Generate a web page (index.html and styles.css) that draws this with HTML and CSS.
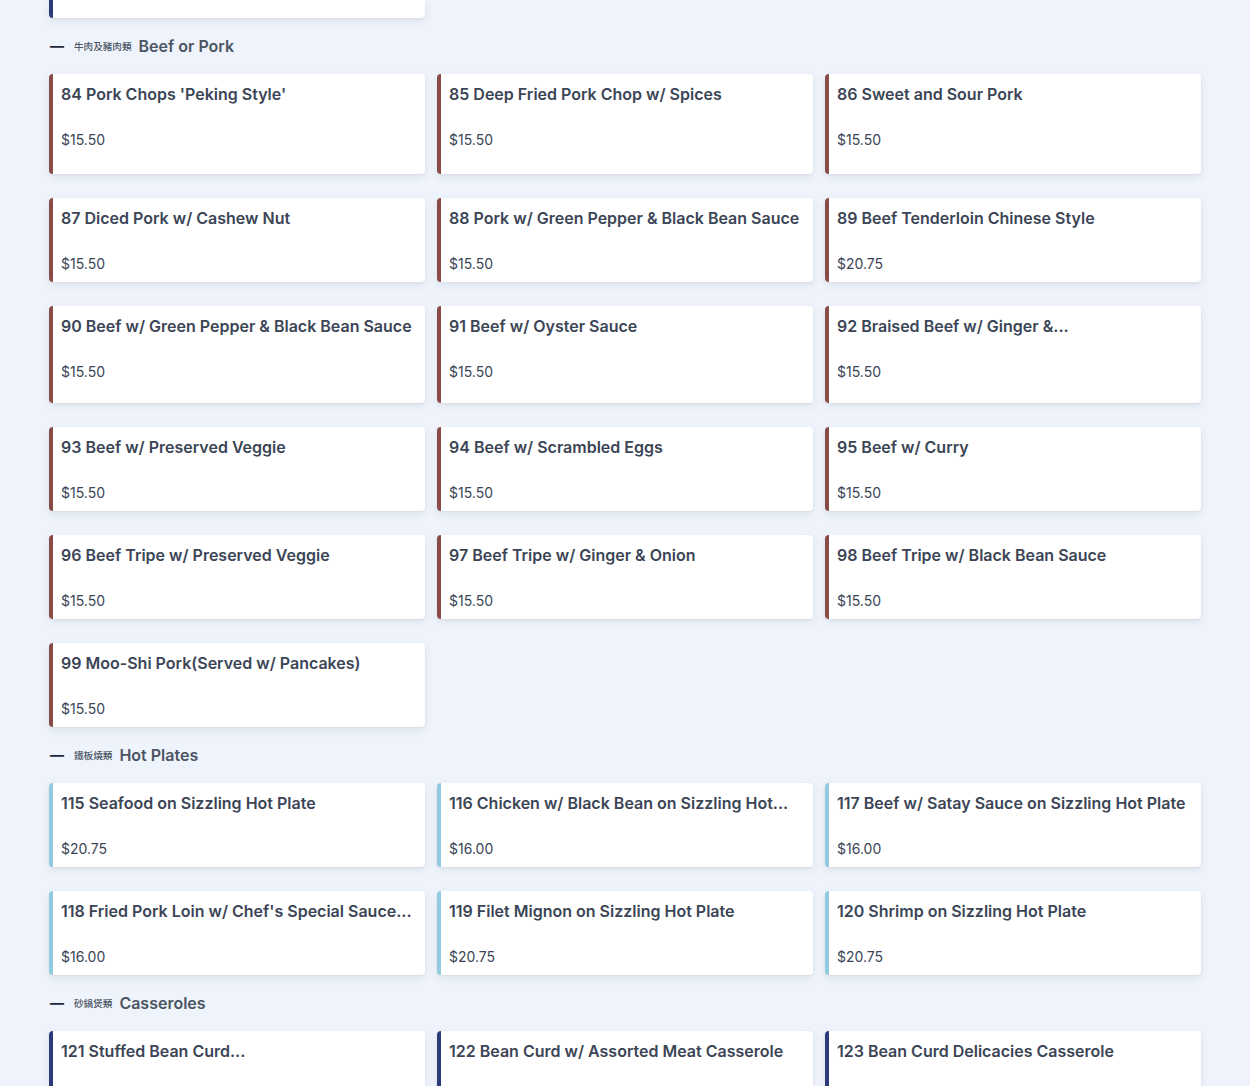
FILE: index.html
```html
<!DOCTYPE html>
<html lang="en">
<head>
<meta charset="utf-8">
<title>Menu</title>
<link rel="stylesheet" href="styles.css">
</head>
<body>
<main class="menu">
  <div class="grid">
    <div class="card card--cut casserole"></div>
  </div>

  <section class="category beef">
    <h2 class="cat-head"><span class="toggle">—</span><span class="zh" lang="zh">牛肉及豬肉類</span><span class="en">Beef or Pork</span></h2>
    <div class="grid">
      <article class="card card--tall"><h3 class="name">84 Pork Chops 'Peking Style'</h3><p class="price">$15.50</p></article>
      <article class="card"><h3 class="name">85 Deep Fried Pork Chop w/ Spices</h3><p class="price">$15.50</p></article>
      <article class="card"><h3 class="name">86 Sweet and Sour Pork</h3><p class="price">$15.50</p></article>
      <article class="card"><h3 class="name">87 Diced Pork w/ Cashew Nut</h3><p class="price">$15.50</p></article>
      <article class="card"><h3 class="name">88 Pork w/ Green Pepper &amp; Black Bean Sauce</h3><p class="price">$15.50</p></article>
      <article class="card"><h3 class="name">89 Beef Tenderloin Chinese Style</h3><p class="price">$20.75</p></article>
      <article class="card card--mid"><h3 class="name">90 Beef w/ Green Pepper &amp; Black Bean Sauce</h3><p class="price">$15.50</p></article>
      <article class="card"><h3 class="name">91 Beef w/ Oyster Sauce</h3><p class="price">$15.50</p></article>
      <article class="card"><h3 class="name">92 Braised Beef w/ Ginger &amp;...</h3><p class="price">$15.50</p></article>
      <article class="card"><h3 class="name">93 Beef w/ Preserved Veggie</h3><p class="price">$15.50</p></article>
      <article class="card"><h3 class="name">94 Beef w/ Scrambled Eggs</h3><p class="price">$15.50</p></article>
      <article class="card"><h3 class="name">95 Beef w/ Curry</h3><p class="price">$15.50</p></article>
      <article class="card"><h3 class="name">96 Beef Tripe w/ Preserved Veggie</h3><p class="price">$15.50</p></article>
      <article class="card"><h3 class="name">97 Beef Tripe w/ Ginger &amp; Onion</h3><p class="price">$15.50</p></article>
      <article class="card"><h3 class="name">98 Beef Tripe w/ Black Bean Sauce</h3><p class="price">$15.50</p></article>
      <article class="card"><h3 class="name">99 Moo-Shi Pork(Served w/ Pancakes)</h3><p class="price">$15.50</p></article>
    </div>
  </section>

  <section class="category hot">
    <h2 class="cat-head"><span class="toggle">—</span><span class="zh" lang="zh">鐵板燒類</span><span class="en">Hot Plates</span></h2>
    <div class="grid">
      <article class="card"><h3 class="name">115 Seafood on Sizzling Hot Plate</h3><p class="price">$20.75</p></article>
      <article class="card"><h3 class="name">116 Chicken w/ Black Bean on Sizzling Hot...</h3><p class="price">$16.00</p></article>
      <article class="card"><h3 class="name">117 Beef w/ Satay Sauce on Sizzling Hot Plate</h3><p class="price">$16.00</p></article>
      <article class="card"><h3 class="name">118 Fried Pork Loin w/ Chef's Special Sauce...</h3><p class="price">$16.00</p></article>
      <article class="card"><h3 class="name">119 Filet Mignon on Sizzling Hot Plate</h3><p class="price">$20.75</p></article>
      <article class="card"><h3 class="name">120 Shrimp on Sizzling Hot Plate</h3><p class="price">$20.75</p></article>
    </div>
  </section>

  <section class="category casserole-cat">
    <h2 class="cat-head"><span class="toggle">—</span><span class="zh" lang="zh">砂鍋煲類</span><span class="en">Casseroles</span></h2>
    <div class="grid">
      <article class="card casserole"><h3 class="name">121 Stuffed Bean Curd...</h3><p class="price">$16.00</p></article>
      <article class="card casserole"><h3 class="name">122 Bean Curd w/ Assorted Meat Casserole</h3><p class="price">$16.00</p></article>
      <article class="card casserole"><h3 class="name">123 Bean Curd Delicacies Casserole</h3><p class="price">$16.00</p></article>
    </div>
  </section>
</main>
</body>
</html>
```

FILE: styles.css
```css
* { box-sizing: border-box; }

html, body {
  margin: 0;
  padding: 0;
  background: #eff4fc;
  font-family: Inter, "Noto Sans", "Noto Sans CJK TC", sans-serif;
  color: #374151;
}

.menu {
  width: 1152px;
  margin: 0 auto;
}

.grid {
  display: grid;
  grid-template-columns: repeat(3, 1fr);
  column-gap: 12px;
  row-gap: 24px;
}

.cat-head {
  display: flex;
  align-items: center;
  margin: 16px 0;
  height: 24px;
  font-size: 16px;
  line-height: 24px;
  font-weight: 600;
  color: #4b5563;
}

.toggle {
  font-size: 14px;
  font-weight: 800;
  color: #1f2937;
  margin-left: 1px;
  margin-right: 10px;
}

.zh {
  font-family: "Noto Sans CJK TC", sans-serif;
  font-size: 9.6px;
  font-weight: 500;
  line-height: 24px;
  color: #4b5563;
  margin-right: 7px;
}

.card {
  background: #ffffff;
  border-left: 4px solid #8a4a47;
  border-radius: 4px;
  padding: 8px;
  min-height: 84px;
  box-shadow: 0 3px 8px rgba(30, 41, 59, 0.09), 0 1px 2px rgba(30, 41, 59, 0.05);
}

.hot .card { border-left-color: #91cbe0; }
.card.casserole { border-left-color: #2b3b7a; }

.card--tall { min-height: 100px; }
.card--mid { min-height: 97px; }

.card--cut {
  min-height: 0;
  height: 18px;
  border-radius: 0 0 4px 4px;
  padding: 0;
}

.name {
  margin: 0 0 24px;
  font-size: 16px;
  line-height: 24px;
  font-weight: 600;
  color: #3b4556;
  white-space: nowrap;
  overflow: hidden;
  text-overflow: ellipsis;
}

.price {
  margin: 0;
  font-size: 14px;
  line-height: 20px;
  font-weight: 400;
  color: #3b4556;
}
```
